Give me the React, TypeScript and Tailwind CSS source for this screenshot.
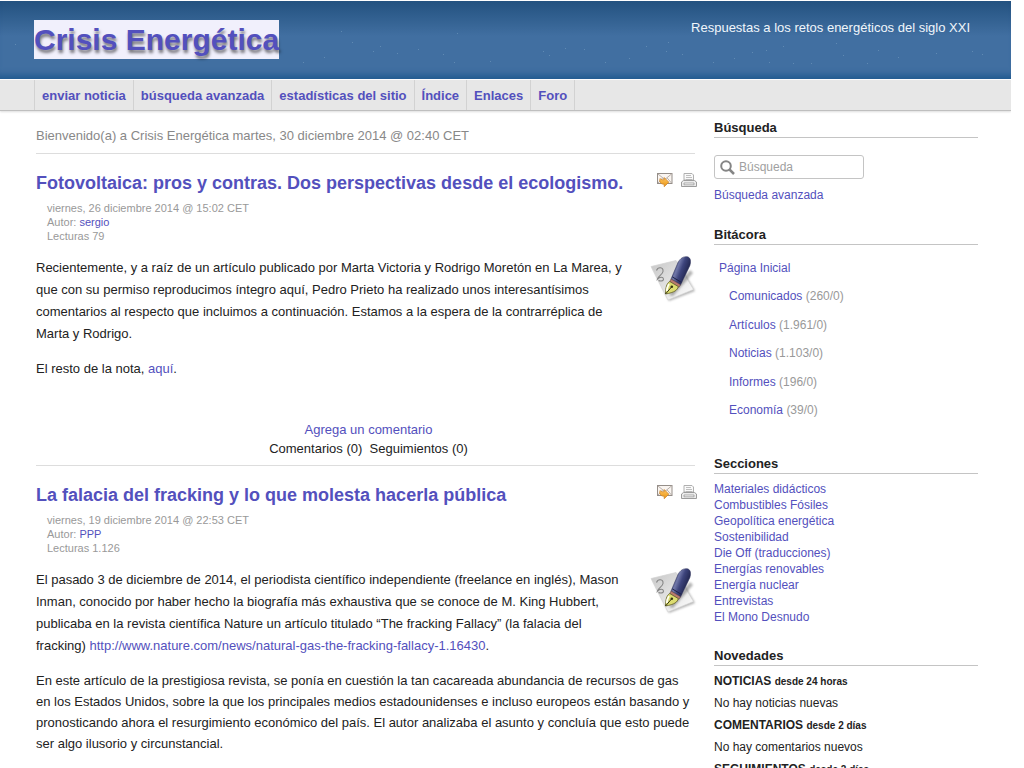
import type { ReactNode } from "react";

const NAV = ["enviar noticia", "búsqueda avanzada", "estadísticas del sitio", "Índice", "Enlaces", "Foro"];

const BLOG = [
  { name: "Comunicados", count: "(260/0)" },
  { name: "Artículos", count: "(1.961/0)" },
  { name: "Noticias", count: "(1.103/0)" },
  { name: "Informes", count: "(196/0)" },
  { name: "Economía", count: "(39/0)" },
];

const SECTIONS = [
  "Materiales didácticos",
  "Combustibles Fósiles",
  "Geopolítica energética",
  "Sostenibilidad",
  "Die Off (traducciones)",
  "Energías renovables",
  "Energía nuclear",
  "Entrevistas",
  "El Mono Desnudo",
];

const NEWS = [
  { title: "NOTICIAS", since: "desde 24 horas", text: "No hay noticias nuevas" },
  { title: "COMENTARIOS", since: "desde 2 días", text: "No hay comentarios nuevos" },
  { title: "SEGUIMIENTOS", since: "desde 2 días", text: "" },
];

const SPECKS = [
  [341, 30], [303, 61], [352, 41], [373, 50], [380, 45], [397, 52], [418, 48], [443, 53], [454, 61], [490, 60],
  [543, 50], [549, 54], [565, 47], [584, 48], [605, 61], [629, 57], [646, 45], [666, 50], [668, 41], [682, 53],
  [713, 61], [734, 57], [752, 51], [766, 49], [769, 61], [783, 45], [793, 62], [811, 62], [836, 42], [843, 54],
  [867, 62], [878, 49], [898, 56], [936, 52], [972, 50], [982, 53], [190, 48], [324, 56], [457, 32], [15, 43],
];

function MailIcon() {
  return (
    <svg width="16" height="16" viewBox="0 0 16 16" aria-hidden="true">
      <defs>
        <linearGradient id="arrow" x1="0" y1="0" x2="0" y2="1">
          <stop offset="0" stopColor="#ffc766" />
          <stop offset="1" stopColor="#ea950f" />
        </linearGradient>
      </defs>
      <rect x=".5" y="2.500" width="14.500" height="10" fill="#faf5f1" stroke="#958e89" />
      <path d="M1 3l6.800 5.500L14.500 3M1 12l4.500-5M14.500 12l-4.300-5" fill="none" stroke="#b0a7a1" strokeWidth=".9" />
      <path d="M3.200 7.500c1 1.300 2 1.500 4 1.200V6.500l4.600 4.700-4.600 4.500v-2.500C4 13.300 1.700 11 3.200 7.500Z" fill="url(#arrow)" stroke="#cf862b" strokeWidth=".8" />
    </svg>
  );
}

function PrintIcon() {
  return (
    <svg width="16" height="16" viewBox="0 0 16 16" aria-hidden="true">
      <path d="M3 2.500h8l1.500 1.500v5H3Z" fill="#fafafa" stroke="#b0b0b0" />
      <path d="M5 4.500h5M5 6.500h6M5 8.500h6" stroke="#b0b0b0" strokeWidth=".8" />
      <path d="M2.500 9.500h11l2 1.500v4.500H.5V11Z" fill="#ececec" stroke="#9c9c9c" />
      <path d="M3 12h10v1.800H3Z" fill="#fff" stroke="#8c8c8c" strokeWidth=".7" />
    </svg>
  );
}

function PenIcon() {
  return (
    <svg width="48" height="48" viewBox="0 0 48 48" aria-hidden="true">
      <defs>
        <linearGradient id="paper" x1="0" y1="0" x2="1" y2="1">
          <stop offset="0" stopColor="#c6c6c6" />
          <stop offset="1" stopColor="#ffffff" />
        </linearGradient>
        <linearGradient id="barrel" x1="0" y1="0" x2="1" y2=".55">
          <stop offset=".1" stopColor="#2c3265" />
          <stop offset=".42" stopColor="#7077a8" />
          <stop offset=".6" stopColor="#3d447c" />
          <stop offset="1" stopColor="#171b3e" />
        </linearGradient>
        <filter id="soft" x="-20%" y="-20%" width="140%" height="140%">
          <feGaussianBlur stdDeviation="1" />
        </filter>
      </defs>
      <path d="M4 13 29 7l17 29-26 10Z" fill="#777" opacity=".55" filter="url(#soft)" />
      <path d="M2 11.500 27 5.500l17.500 29L19 45Z" fill="url(#paper)" stroke="#d4d4d4" strokeWidth=".7" />
      <path d="M7.500 15.500c1.500-4 7-3.500 6.500 1-.3 3-4.500 4-5.500 7.500 2-2 5.500-2.500 6 0 .3 2-2.500 2.500-5 1.500" fill="none" stroke="#858585" strokeWidth="1.100" />
      <path d="M20 40 41 15l3 3-20 23Z" fill="#555" opacity=".45" filter="url(#soft)" />
      <path d="M29 7.500C31 3.500 34.500 1 38.500 1.800c3.500 1 3.500 5.200 2.300 9L31.500 30 22 24Z" fill="url(#barrel)" stroke="#262b54" strokeWidth=".5" />
      <path d="m23.200 21.800 9.200 5.600" stroke="#1e2346" strokeWidth="1" />
      <path d="m22 24 9.500 5.800-1.500 2.500-9.300-5.500Z" fill="#b97a70" stroke="#4c3a3a" strokeWidth=".5" />
      <path d="m20.700 26.500 8.500 5c-.5 3.500-3.700 6-12.700 7.500 0-6.500 1.200-10.700 4.200-12.500Z" fill="#dcdc70" stroke="#5e5c24" strokeWidth=".8" />
      <path d="M20 29c-1.700 2.500-2.100 4.500-2.300 7" fill="none" stroke="#fffff0" strokeWidth="1.800" />
      <path d="m16.500 39 6-7" stroke="#343414" strokeWidth="1" />
      <circle cx="22.800" cy="31.800" r="1.300" fill="#343414" />
    </svg>
  );
}

function Article({ title, date, author, reads, children }: { title: string; date: string; author: string; reads: string; children: ReactNode }) {
  return (
    <article className="pt-[17px]">
      <header className="flex items-start">
        <h2 className="grow text-lg leading-6 font-bold">
          <a href="#">{title}</a>
        </h2>
        <div className="-mr-0.5 flex gap-2">
          <a href="#" aria-label="Enviar por correo">
            <MailIcon />
          </a>
          <a href="#" aria-label="Imprimir">
            <PrintIcon />
          </a>
        </div>
      </header>
      <div className="mt-1.5 pl-[11px] text-[11px] leading-[14px] text-[#999]">
        <p>{date}</p>
        <p>
          Autor: <a href="#">{author}</a>
        </p>
        <p>{reads}</p>
      </div>
      <div className="mt-3.5">
        <a href="#" aria-label="Artículos" className="-mt-0.5 -mr-0.5 ml-4 float-right">
          <PenIcon />
        </a>
        {children}
      </div>
    </article>
  );
}

function Heading({ children }: { children: ReactNode }) {
  return <h3 className="border-b border-[#c4c4c4] text-[13px] leading-[18px] font-bold">{children}</h3>;
}

export default function App() {
  return (
    <div className="mr-[13px] overflow-hidden bg-white pt-px font-['Liberation_Sans',Arial,sans-serif] text-[13px] text-[#222] [&_a]:text-[#5350bd]">
      <header className="relative flex h-[78px] items-start justify-between bg-linear-to-b from-[#235280] via-[#416fa1] via-45% to-[#416fa1] pr-[41px] pl-[34px] shadow-[inset_0_-9px_6px_-5px_#215b90]">
        <svg className="absolute inset-0 h-full w-full" aria-hidden="true">
          {SPECKS.map(([x, y]) => (
            <rect key={`${x}-${y}`} x={x} y={y} width="1" height="1" fill="#8fb4cf" opacity=".4" />
          ))}
        </svg>
        <h1 className="relative mt-[19px] bg-[#f1f0fc] text-[30px] leading-[39px] font-bold [text-shadow:1px_3px_3px_rgba(0,0,0,0.5)]">
          <a href="#">Crisis Energética</a>
        </h1>
        <p className="relative mt-[17px] leading-5 text-[#f0f6fb]">Respuestas a los retos energéticos del siglo XXI</p>
      </header>
      <nav className="mt-px border-b border-[#bfbfbf] bg-[#e7e7e7] pl-[34px] shadow-[0_1px_2px_#ddd]">
        <ul className="flex">
          {NAV.map((item) => (
            <li key={item} className="border-r border-[#d2d2d2] px-[7px] pt-0.5 leading-7 font-bold first:border-l">
              <a href="#">{item}</a>
            </li>
          ))}
        </ul>
      </nav>
      <div className="flex gap-[19px] pr-[33px] pl-9">
        <main className="min-w-0 grow">
          <p className="border-b border-[#ddd] pt-[15px] pb-[7px] leading-5 text-[#888]">
            Bienvenido(a) a Crisis Energética martes, 30 diciembre 2014 @ 02:40 CET
          </p>
          <Article
            title="Fotovoltaica: pros y contras. Dos perspectivas desde el ecologismo."
            date="viernes, 26 diciembre 2014 @ 15:02 CET"
            author="sergio"
            reads="Lecturas 79"
          >
            <p className="leading-[22px]">
              Recientemente, y a raíz de un artículo publicado por Marta Victoria y Rodrigo Moretón en La Marea, y que con su
              permiso reproducimos íntegro aquí, Pedro Prieto ha realizado unos interesantísimos comentarios al respecto que
              incluimos a continuación. Estamos a la espera de la contrarréplica de Marta y Rodrigo.
            </p>
            <p className="mt-[13px] leading-[22px]">
              El resto de la nota, <a href="#">aquí</a>.
            </p>
          </Article>
          <footer className="mt-10 border-b border-[#ddd] pb-[7px] pl-1.5 text-center leading-[19px]">
            <p>
              <a href="#">Agrega un comentario</a>
            </p>
            <p>Comentarios (0)&nbsp; Seguimientos (0)</p>
          </footer>
          <Article
            title="La falacia del fracking y lo que molesta hacerla pública"
            date="viernes, 19 diciembre 2014 @ 22:53 CET"
            author="PPP"
            reads="Lecturas 1.126"
          >
            <p className="leading-[22px]">
              El pasado 3 de diciembre de 2014, el periodista científico independiente (freelance en inglés), Mason Inman,
              conocido por haber hecho la biografía más exhaustiva que se conoce de M. King Hubbert, publicaba en la revista
              científica Nature un artículo titulado “The fracking Fallacy” (la falacia del fracking){" "}
              <a href="#">http://www.nature.com/news/natural-gas-the-fracking-fallacy-1.16430</a>.
            </p>
            <p className="mt-[13px] leading-[21px]">
              En este artículo de la prestigiosa revista, se ponía en cuestión la tan cacareada abundancia de recursos de gas
              en los Estados Unidos, sobre la que los principales medios estadounidenses e incluso europeos están basando y
              pronosticando ahora el resurgimiento económico del país. El autor analizaba el asunto y concluía que esto puede
              ser algo ilusorio y circunstancial.
            </p>
          </Article>
        </main>
        <aside className="w-[264px] shrink-0 pt-2 text-xs">
          <section>
            <Heading>Búsqueda</Heading>
            <label className="mt-[17px] flex h-6 w-[150px] items-center gap-1 rounded-[3px] border border-[#c4c4c4] pl-[5px]">
              <svg className="shrink-0" width="15" height="15" viewBox="0 0 15 15" fill="none" stroke="#858585" strokeWidth="2" aria-hidden="true">
                <circle cx="6" cy="6" r="4.800" />
                <path d="m9.500 9.500 4.500 4.500" strokeWidth="2.500" />
              </svg>
              <input
                type="text"
                aria-label="Búsqueda"
                placeholder="Búsqueda"
                className="w-full min-w-0 text-xs outline-none placeholder:text-[#a0a0a0]"
              />
            </label>
            <p className="mt-2 leading-4">
              <a href="#">Búsqueda avanzada</a>
            </p>
          </section>
          <section className="mt-[23px]">
            <Heading>Bitácora</Heading>
            <ul className="mt-[13px] flex h-[162px] flex-col justify-between pl-[5px] leading-5 text-[#999]">
              <li>
                <a href="#">Página Inicial</a>
              </li>
              {BLOG.map((item) => (
                <li key={item.name} className="pl-2.5">
                  <a href="#">{item.name}</a> {item.count}
                </li>
              ))}
            </ul>
          </section>
          <section className="mt-[35px]">
            <Heading>Secciones</Heading>
            <ul className="mt-[7px] leading-4">
              {SECTIONS.map((item) => (
                <li key={item}>
                  <a href="#">{item}</a>
                </li>
              ))}
            </ul>
          </section>
          <section className="mt-[22px]">
            <Heading>Novedades</Heading>
            <dl className="mt-1 leading-[22px]">
              {NEWS.map((item) => (
                <div key={item.title}>
                  <dt className="font-bold">
                    {item.title} <small className="text-[10px] leading-none">{item.since}</small>
                  </dt>
                  <dd>{item.text}</dd>
                </div>
              ))}
            </dl>
          </section>
        </aside>
      </div>
    </div>
  );
}
